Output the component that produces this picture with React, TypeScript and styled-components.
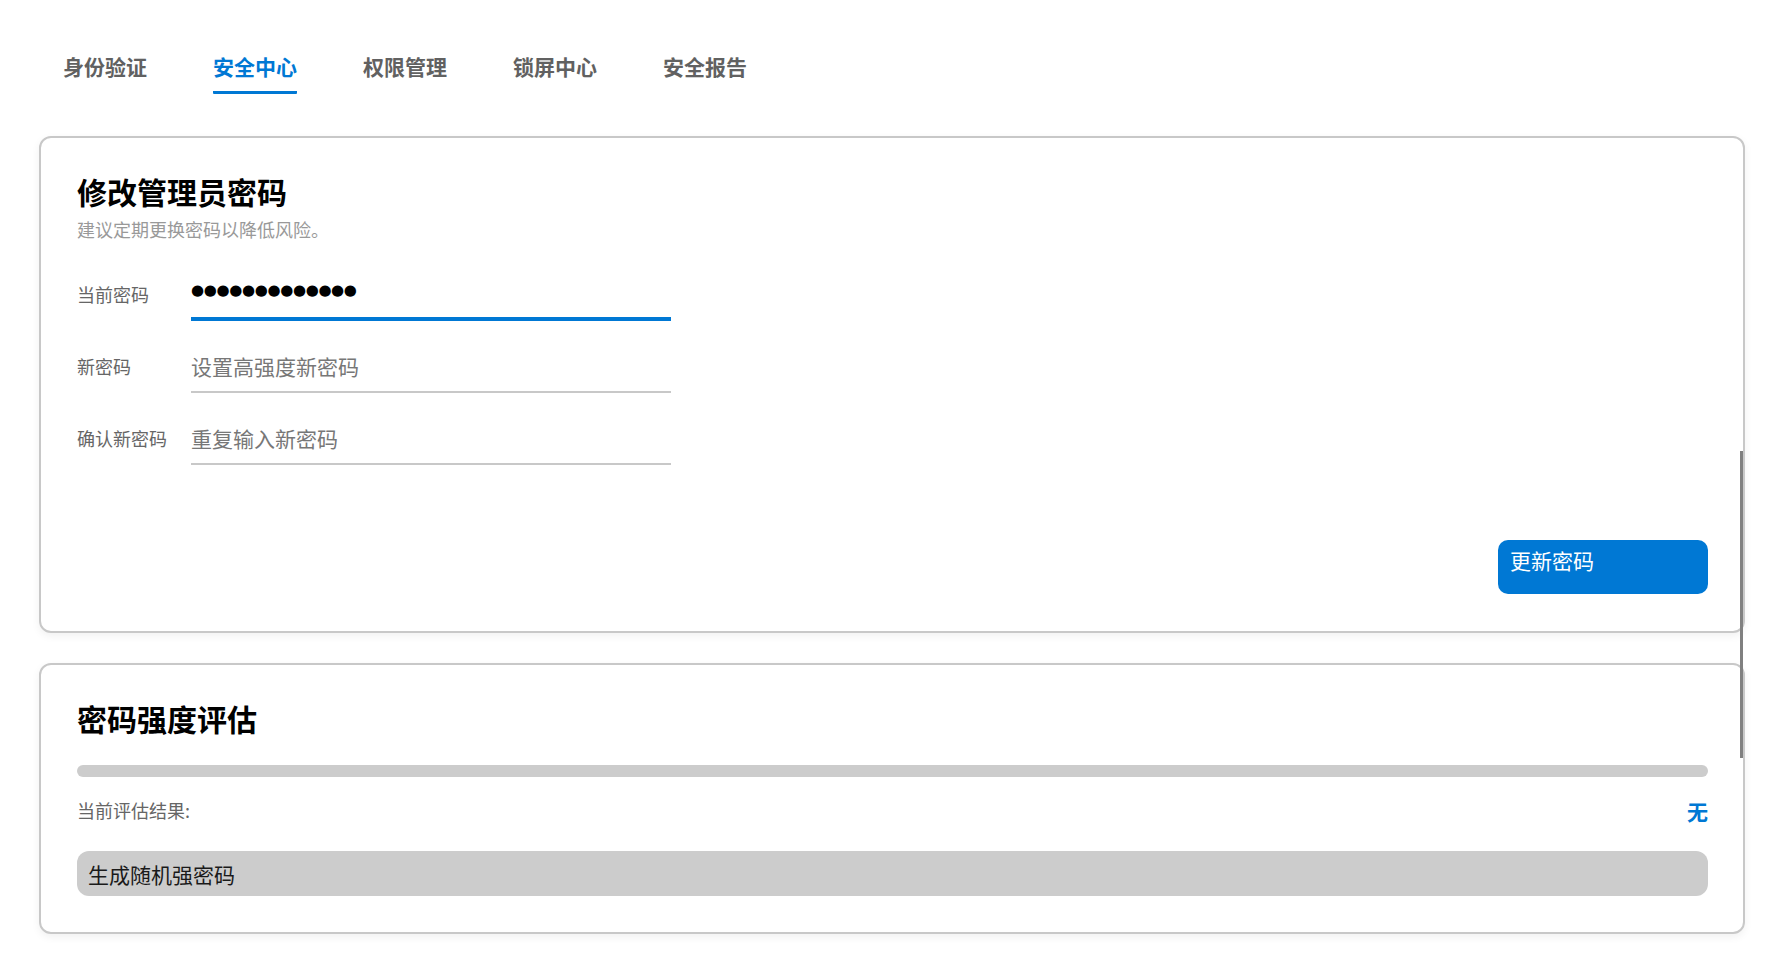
import React from 'react';
import styled, { createGlobalStyle } from 'styled-components';

// Base page styles
const GlobalStyle = createGlobalStyle`
  html, body {
    margin: 0;
    padding: 0;
    background: #ffffff;
  }
  body {
    font-family: "Noto Sans CJK SC", "Noto Sans", sans-serif;
    color: #1a1a1a;
  }
  * {
    box-sizing: border-box;
  }
`;

const BLUE = '#0078d4';

const Page = styled.div`
  position: relative;
  padding: 52px 37px 40px 39px;
`;

// Top tab bar
const TabBar = styled.nav`
  display: flex;
  gap: 66px;
  padding-left: 24px;
`;

const Tab = styled.div<{ $active?: boolean }>`
  font-size: 21px;
  font-weight: 700;
  line-height: 28px;
  padding-bottom: 11px;
  color: ${p => (p.$active ? BLUE : '#616161')};
  border-bottom: 3px solid ${p => (p.$active ? BLUE : 'transparent')};
  border-radius: 1px;
  cursor: pointer;
`;

// Card container
const Card = styled.section<{ $gap?: number; $padBottom?: number }>`
  margin-top: ${p => p.$gap ?? 30}px;
  border: 2px solid #c8c8c8;
  border-radius: 12px;
  padding: 35px 35px ${p => p.$padBottom ?? 36}px 36px;
  background: #fff;
  box-shadow: 0 3px 8px rgba(0, 0, 0, 0.06);
`;

const CardTitle = styled.h2`
  margin: 0;
  font-size: 30px;
  line-height: 36px;
  font-weight: 700;
  color: #000;
`;

const Subtitle = styled.p`
  margin: 7px 0 0;
  font-size: 18px;
  line-height: 27px;
  color: #999;
`;

// Form rows
const Form = styled.div`
  display: flex;
  flex-direction: column;
  gap: 20px;
  margin-top: 26px;
`;

const Row = styled.label`
  display: flex;
  align-items: center;
`;

const Label = styled.span`
  width: 114px;
  flex-shrink: 0;
  margin-top: -3px;
  font-size: 18px;
  color: #666;
`;

const Input = styled.input<{ $focused?: boolean; $masked?: boolean }>`
  width: 480px;
  height: 52px;
  padding: 0 0 ${p => (p.$masked ? 7 : 0)}px;
  border: none;
  border-bottom: ${p => (p.$focused ? `4px solid ${BLUE}` : '2px solid #c8c8c8')};
  outline: none;
  background: transparent;
  font-family: ${p => (p.$masked ? '"DejaVu Sans", sans-serif' : '"Noto Sans CJK SC", sans-serif')};
  font-size: ${p => (p.$masked ? '15px' : '21px')};
  letter-spacing: ${p => (p.$masked ? '-0.35px' : 'normal')};
  color: #000;
  caret-color: #000;

  &::placeholder {
    color: #777;
  }
`;

const Actions = styled.div`
  display: flex;
  justify-content: flex-end;
  margin-top: 75px;
`;

const PrimaryButton = styled.button`
  width: 210px;
  height: 54px;
  padding: 5px 12px;
  border: none;
  border-radius: 10px;
  background: ${BLUE};
  color: #fff;
  font-family: inherit;
  font-size: 21px;
  line-height: 1.5;
  text-align: left;
  display: flex;
  align-items: flex-start;
  cursor: pointer;
`;

// Strength section
const Meter = styled.div`
  margin-top: 29px;
  height: 12px;
  border-radius: 6px;
  background: #cccccc;
  overflow: hidden;
`;

const MeterFill = styled.div`
  height: 100%;
  background: ${BLUE};
`;

const ResultRow = styled.div`
  display: flex;
  justify-content: space-between;
  align-items: center;
  margin-top: 19px;
`;

const ResultLabel = styled.span`
  font-size: 18px;
  line-height: 27px;
  color: #666;
  transform: translateY(-1px);
`;

const ResultValue = styled.span`
  font-size: 21px;
  line-height: 31px;
  font-weight: 700;
  color: ${BLUE};
`;

const GhostButton = styled.button`
  display: block;
  width: 100%;
  height: 45px;
  margin-top: 24px;
  padding: 0 11px;
  border: none;
  border-radius: 12px;
  background: #cccccc;
  color: #1a1a1a;
  font-family: inherit;
  font-size: 21px;
  text-align: left;
  cursor: pointer;
`;

// Overlay scrollbar thumb
const ScrollThumb = styled.div`
  position: absolute;
  top: 451px;
  right: 39px;
  width: 3px;
  height: 307px;
  background: #808080;
`;

const tabs = ['身份验证', '安全中心', '权限管理', '锁屏中心', '安全报告'];

export default function App() {
  const strength = 0;
  const masked = '●'.repeat(13);

  return (
    <Page>
      <GlobalStyle />
      <TabBar>
        {tabs.map(t => (
          <Tab key={t} $active={t === '安全中心'}>{t}</Tab>
        ))}
      </TabBar>

      <Card $gap={42} $padBottom={37}>
        <CardTitle>修改管理员密码</CardTitle>
        <Subtitle>建议定期更换密码以降低风险。</Subtitle>
        <Form>
          <Row>
            <Label>当前密码</Label>
            <Input type="text" defaultValue={masked} $focused $masked autoFocus />
          </Row>
          <Row>
            <Label>新密码</Label>
            <Input type="password" placeholder="设置高强度新密码" />
          </Row>
          <Row>
            <Label>确认新密码</Label>
            <Input type="password" placeholder="重复输入新密码" />
          </Row>
        </Form>
        <Actions>
          <PrimaryButton>更新密码</PrimaryButton>
        </Actions>
      </Card>

      <Card>
        <CardTitle>密码强度评估</CardTitle>
        <Meter>
          <MeterFill style={{ width: `${strength}%` }} />
        </Meter>
        <ResultRow>
          <ResultLabel>当前评估结果:</ResultLabel>
          <ResultValue>无</ResultValue>
        </ResultRow>
        <GhostButton>生成随机强密码</GhostButton>
      </Card>

      <ScrollThumb />
    </Page>
  );
}
